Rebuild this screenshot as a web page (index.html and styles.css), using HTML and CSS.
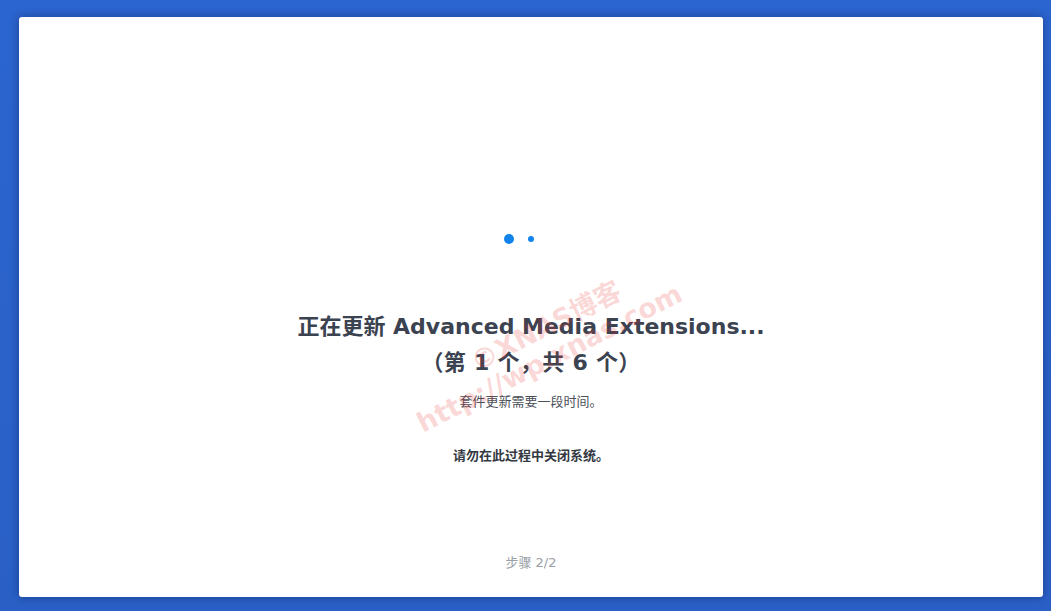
FILE: index.html
```html
<!DOCTYPE html>
<html lang="zh-CN">
<head>
<meta charset="utf-8">
<title>正在更新</title>
<link rel="stylesheet" href="styles.css">
</head>
<body>
<div class="card">
  <div class="dots">
    <span class="dot dot-big"></span>
    <span class="dot dot-small"></span>
  </div>
  <h1 class="title">正在更新 Advanced Media Extensions...<br><span class="count">（第 1 个，共 6 个）</span></h1>
  <p class="desc">套件更新需要一段时间。</p>
  <p class="warn">请勿在此过程中关闭系统。</p>
  <p class="step">步骤 2/2</p>
  <span class="wm wm-1">©XNAS博客</span>
  <span class="wm wm-2">http://wp.xnas.com</span>
</div>
</body>
</html>
```

FILE: styles.css
```css
html, body {
  margin: 0;
  height: 100%;
}
body {
  background: linear-gradient(180deg, #2b65cf 0%, #2a60c6 100%);
  padding: 17px 8px 14px 19px;
  box-sizing: border-box;
  font-family: "DejaVu Sans", "Noto Sans CJK SC", sans-serif;
  overflow: hidden;
}
.card {
  position: relative;
  height: 580px;
  background: #ffffff;
  border-radius: 3px;
  box-shadow: 0 0 10px rgba(10, 20, 70, 0.45);
  display: flex;
  flex-direction: column;
  align-items: center;
  padding-top: 217px;
  padding-bottom: 24px;
  box-sizing: border-box;
  overflow: hidden;
}
.dots {
  display: flex;
  align-items: center;
  gap: 14px;
  height: 10px;
  margin-right: 24px;
}
.dot {
  display: block;
  border-radius: 50%;
  background: #1283ea;
}
.dot-big {
  width: 10px;
  height: 10px;
}
.dot-small {
  width: 6px;
  height: 6px;
}
.title {
  margin: 65px 0 0;
  font-size: 22px;
  line-height: 36px;
  font-weight: bold;
  color: #3b4250;
  text-align: center;
}
.count {
  letter-spacing: 0.3px;
}
.desc {
  margin: 10px 0 0;
  font-family: "Noto Sans CJK SC", sans-serif;
  font-size: 13px;
  line-height: 20px;
  color: #4a4f58;
}
.warn {
  margin: 34px 0 0;
  font-family: "Noto Sans CJK SC", sans-serif;
  font-size: 13px;
  line-height: 20px;
  font-weight: bold;
  color: #333842;
}
.step {
  margin: auto 0 0;
  font-family: "DejaVu Sans", "Noto Sans CJK SC", sans-serif;
  font-size: 13px;
  line-height: 20px;
  color: #9a9ea6;
}
.wm {
  position: absolute;
  white-space: nowrap;
  pointer-events: none;
  color: rgba(238, 50, 50, 0.2);
  font-family: "DejaVu Sans", "Noto Sans CJK SC", sans-serif;
  font-weight: bold;
  font-size: 27px;
  line-height: 27px;
  transform: rotate(-27deg);
  transform-origin: 0 23px;
}
.wm-1 {
  left: 458px;
  top: 332px;
}
.wm-2 {
  left: 404px;
  top: 393px;
}
```
